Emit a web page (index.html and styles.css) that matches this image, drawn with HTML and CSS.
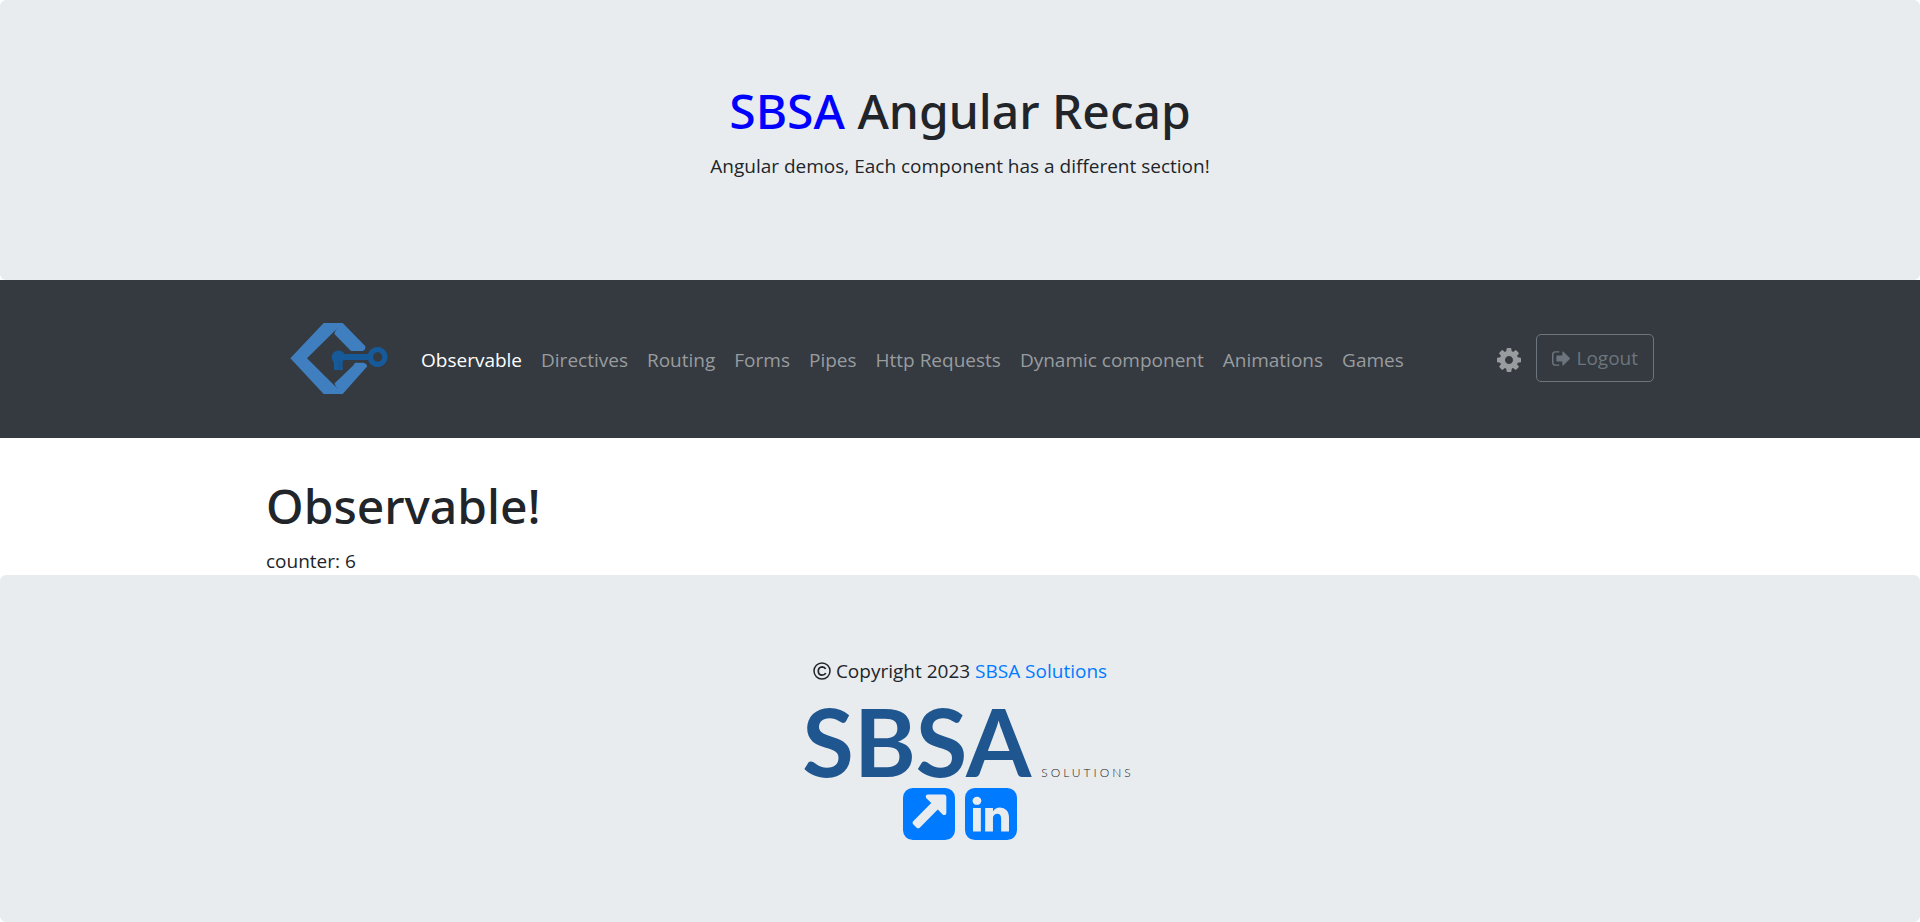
FILE: index.html
```html
<!DOCTYPE html>
<html lang="en">
<head>
<meta charset="utf-8">
<title>SBSA Angular Recap</title>
<link rel="stylesheet" href="styles.css">
</head>
<body class="page">
<header class="banner">
  <h1 class="title"><span class="title-brand">SBSA</span> Angular Recap</h1>
  <p class="lead">Angular demos, Each component has a different section!</p>
</header>
<nav class="navbar">
  <div class="container navbar-inner">
    <a class="brand" href="#" aria-label="SBSA home">
      <svg class="brand-logo" viewBox="30 38 292 213" aria-hidden="true">
        <path fill="#3f7fbf" d="M30 144 130 38H187L255 108V114Q254 121 247 122H212L162 71Q164 60 172 53L80 144 173 236Q163 227 163 219L218 166 224 157H250Q259 159 261 168L187 251H130Z"/>
        <path fill="#175a9a" d="M154 139A21 21 0 0 1 193 131H263A30 30 0 1 1 263 149H188Q187 155 187 160V179H161V158Q154 150 154 139Z"/>
        <circle cx="292" cy="140" r="14" fill="#343a40"/>
        <path d="M177 179V164H187M177 152V160" fill="none" stroke="#343a40" stroke-width="1"/>
      </svg>
    </a>
    <ul class="menu">
      <li><a class="menu-link active" href="#">Observable</a></li>
      <li><a class="menu-link" href="#">Directives</a></li>
      <li><a class="menu-link" href="#">Routing</a></li>
      <li><a class="menu-link" href="#">Forms</a></li>
      <li><a class="menu-link" href="#">Pipes</a></li>
      <li><a class="menu-link" href="#">Http Requests</a></li>
      <li><a class="menu-link" href="#">Dynamic component</a></li>
      <li><a class="menu-link" href="#">Animations</a></li>
      <li><a class="menu-link" href="#">Games</a></li>
    </ul>
    <div class="actions">
      <a class="settings" href="#" aria-label="Settings">
        <svg class="icon-cog" viewBox="0 0 1536 1536" aria-hidden="true"><path d="M1024 768q0-106-75-181t-181-75-181 75-75 181 75 181 181 75 181-75 75-181zM1536 659v222q0 12-8 23t-20 13l-185 28q-19 54-39 91 35 50 107 138 10 12 10 25t-9 23q-27 37-99 108t-94 71q-12 0-26-9l-138-108q-44 23-91 38-16 136-29 186-7 28-36 28h-222q-14 0-24.500-8.500t-11.500-21.500l-28-184q-49-16-90-37l-141 107q-10 9-25 9-14 0-25-11-126-114-165-168-7-10-7-23 0-12 8-23 15-21 51-66.500t54-70.500q-27-50-41-99l-183-27q-13-2-21-12.500t-8-23.500v-222q0-12 8-23t19-13l186-28q14-46 39-92-40-57-107-138-10-12-10-24 0-10 9-23 26-36 98.500-107.500t94.500-71.500q13 0 26 10l138 107q44-23 91-38 16-136 29-186 7-28 36-28h222q14 0 24.500 8.500t11.500 21.500l28 184q49 16 90 37l142-107q9-9 24-9 13 0 25 10 129 119 165 170 7 8 7 22 0 12-8 23-15 21-51 66.500t-54 70.500q26 50 41 98l183 28q13 2 21 12.500t8 23.500z"/></svg>
      </a>
      <button class="logout" type="button">
        <svg class="icon-exit" viewBox="0 256 1568 1280" aria-hidden="true"><path d="M640 1440q0 4 1 20t.5 26.500-3 23.500-10 19.500-20.500 6.500h-320q-119 0-203.500-84.500t-84.500-203.500v-704q0-119 84.500-203.500t203.500-84.500h320q13 0 22.500 9.500t9.500 22.500q0 4 1 20t.5 26.500-3 23.500-10 19.500-20.500 6.500h-320q-66 0-113 47t-47 113v704q0 66 47 113t113 47h312l11.500 1 11.500 3 8 5.500 7 9 2 13.500zM1568 896q0 26-19 45l-544 544q-19 19-45 19t-45-19-19-45v-288h-448q-26 0-45-19t-19-45v-384q0-26 19-45t45-19h448v-288q0-26 19-45t45-19 45 19l544 544q19 19 19 45z"/></svg>
        Logout
      </button>
    </div>
  </div>
</nav>
<main class="container content">
  <h1 class="title">Observable!</h1>
  <div class="counter">counter: 6</div>
</main>
<footer class="footer">
  <p class="copyright">
    <svg class="icon-copyright" viewBox="0 0 18 18" aria-hidden="true"><g fill="none" stroke="currentColor"><circle cx="9" cy="9" r="8" stroke-width="1.500"/><path stroke-width="1.700" d="M12.600 7Q11.700 4.800 9.200 4.800 5.300 5 5.300 9T9.200 13.200Q11.800 13.200 12.700 11"/></g></svg>
    <span>Copyright 2023 <a class="link" href="#">SBSA Solutions</a></span>
  </p>
  <div class="wordmark"><span class="wordmark-name">SBSA</span><span class="wordmark-sub">SOLUTIONS</span></div>
  <div class="social">
    <a class="social-link" href="#" aria-label="Website">
      <svg class="icon-social" viewBox="0 0 1536 1536" aria-hidden="true"><path d="M1280 736v-480q0-26-19-45t-45-19h-480q-42 0-59 39-17 41 14 70l144 144-534 534q-19 19-19 45t19 45l102 102q19 19 45 19t45-19l534-534 144 144q18 19 45 19 12 0 25-5 39-17 39-59zM1536 288v960q0 119-84.500 203.500t-203.500 84.500h-960q-119 0-203.500-84.500t-84.500-203.500v-960q0-119 84.500-203.500t203.500-84.500h960q119 0 203.500 84.500t84.500 203.500z"/></svg>
    </a>
    <a class="social-link" href="#" aria-label="LinkedIn">
      <svg class="icon-social" viewBox="0 0 1536 1536" aria-hidden="true"><path d="M237 1286h231v-694h-231v694zM483 378q-1-52-36-86t-93-34-94.500 34-36.500 86q0 51 35.500 85.500t92.500 34.500h1q59 0 95-34.500t36-85.500zM1068 1286h231v-398q0-154-73-233t-193-79q-136 0-209 117h2v-101h-231q3 66 0 694h231v-388q0-38 7-56 15-35 45-59.500t74-24.500q116 0 116 157v371zM1536 288v960q0 119-84.500 203.500t-203.500 84.500h-960q-119 0-203.500-84.500t-84.500-203.500v-960q0-119 84.500-203.500t203.500-84.500h960q119 0 203.500 84.500t84.500 203.500z"/></svg>
    </a>
  </div>
</footer>
</body>
</html>
```
FILE: styles.css
```css
* { box-sizing: border-box; }

.page {
  margin: 0;
  min-height: 100vh;
  display: flex;
  flex-direction: column;
  background: #fff;
  color: #212529;
  font: 19px/30px "Segoe UI", "Open Sans", sans-serif;
}

svg { display: block; fill: currentColor; }
a { text-decoration: none; }

.container {
  width: 100%;
  max-width: 1388px;
  margin: 0 auto;
}

.banner, .footer {
  background: #e9ecef;
  border-radius: 6px;
  padding: 81px 40px 79px;
  text-align: center;
}

.title {
  margin: 0 0 10px;
  font-family: "Segoe UI", "Noto Sans", sans-serif;
  font-size: 48px;
  font-weight: 500;
  line-height: 60px;
}
.title-brand { color: #00f; }
.lead { margin: 0 0 20px; }

.navbar {
  background: #343a40;
  padding: 40px 0;
}
.navbar-inner {
  display: flex;
  align-items: center;
  min-height: 78px;
}
.brand { padding: 0 24px 2px; }
.brand-logo { width: 98px; height: 71px; }

.menu {
  display: flex;
  flex-wrap: wrap;
  margin: 0;
  padding: 0;
  list-style: none;
}
.menu-link {
  display: block;
  padding: 11px 10px 9px 9px;
  color: #999c9f;
}
.menu-link.active { color: #fff; }

.actions {
  display: flex;
  align-items: center;
  gap: 15px;
  margin-left: auto;
  padding-bottom: 2px;
}
.settings {
  padding-top: 4px;
  color: #999c9f;
}
.icon-cog { width: 24px; height: 24px; }
.logout {
  display: flex;
  align-items: center;
  gap: 6px;
  padding: 8px 15px;
  border: 1px solid #6c757d;
  border-radius: 5px;
  background: transparent;
  color: #6c757d;
  font: inherit;
}
.icon-exit { width: 18px; height: 15px; }

.content { padding-top: 38px; }
.counter { margin-bottom: -1px; }

.footer { flex-grow: 1; }
.copyright {
  display: flex;
  justify-content: center;
  align-items: center;
  gap: 5px;
  margin: 0 0 20px;
}
.icon-copyright { width: 18px; height: 18px; }
.link { color: #007bff; }

.wordmark {
  display: flex;
  justify-content: center;
  align-items: baseline;
  gap: 10px;
  padding-left: 16px;
  font-family: Lato, sans-serif;
}
.wordmark-name {
  color: #1f568f;
  font-size: 94px;
  font-weight: 700;
  line-height: 70px;
}
.wordmark-sub {
  color: #222;
  font-size: 12px;
  font-weight: 300;
  line-height: 12px;
  letter-spacing: 3px;
}

.social {
  display: flex;
  justify-content: center;
  gap: 10px;
  padding-top: 9px;
}
.social-link { color: #007bff; }
.icon-social { width: 52px; height: 52px; }
```
